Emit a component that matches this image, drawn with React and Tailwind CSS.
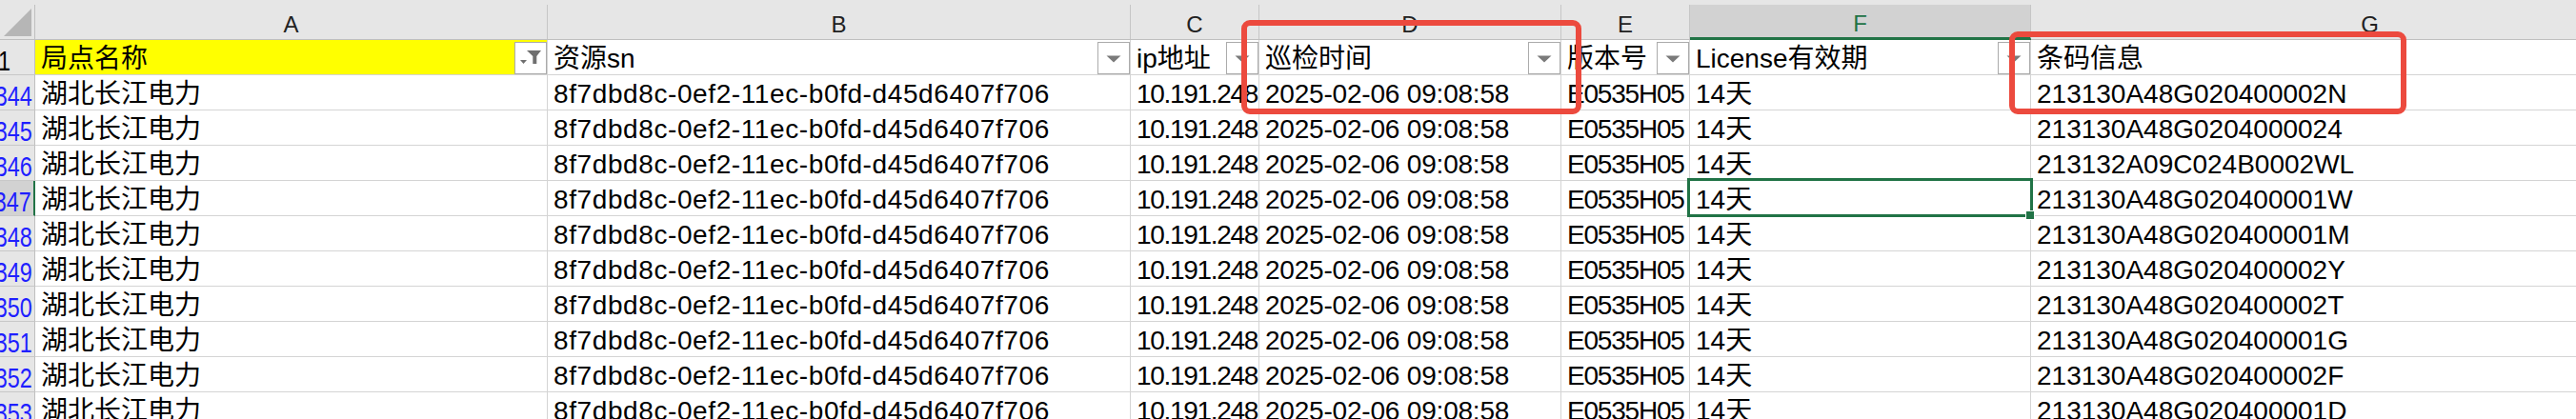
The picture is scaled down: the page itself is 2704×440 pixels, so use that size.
import React from "react";

const ROWS = [
  { n: "1344", g: "213130A48G020400002N" },
  { n: "1345", g: "213130A48G0204000024" },
  { n: "1346", g: "213132A09C024B0002WL" },
  { n: "1347", g: "213130A48G020400001W", selected: true },
  { n: "1348", g: "213130A48G020400001M" },
  { n: "1349", g: "213130A48G020400002Y" },
  { n: "1350", g: "213130A48G020400002T" },
  { n: "1351", g: "213130A48G020400001G" },
  { n: "1352", g: "213130A48G020400002F" },
  { n: "1353", g: "213130A48G020400001D" },
];

const LETTERS = ["A", "B", "C", "D", "E", "F", "G"];

const FilterBtn = ({ funnel }) => (
  <div className="shrink-0 self-end w-[34px] h-[34px] border border-[#ababab] bg-white">
    <svg width="32" height="32" viewBox="0 0 32 32">
      {funnel ? (
        <>
          <path d="M12 8H27L22.3 14V22H18.3V14Z" fill="#6f6f6f" />
          <path d="M5 18H12L8.5 22Z" fill="#6f6f6f" />
        </>
      ) : (
        <path d="M8.5 13.5H23.5L16 20.5Z" fill="#7a7a7a" />
      )}
    </svg>
  </div>
);

const Cell = ({ children, className = "" }) => (
  <div
    className={`h-[37px] border-r border-b border-[#d4d4d4] flex items-end overflow-hidden whitespace-nowrap ${className}`}
  >
    {children}
  </div>
);

const Txt = ({ children, className = "" }) => (
  <span className={`block pl-[6px] text-[28px] leading-[32px] text-black ${className}`}>
    {children}
  </span>
);

const HeadCell = ({ label, funnel, yellow }) => (
  <Cell className={yellow ? "bg-[#ffff00]" : "bg-white"}>
    <div className="flex-1 min-w-0 overflow-hidden">
      <Txt>{label}</Txt>
    </div>
    <FilterBtn funnel={funnel} />
  </Cell>
);

const RowNum = ({ n, selected, black }) => (
  <div
    className={`h-[37px] border-b border-[#c8c8c8] flex items-end overflow-hidden ${
      selected
        ? "bg-[#d2d2d2] border-r-2 border-r-[#217346]"
        : "bg-[#e6e6e6] border-r border-r-[#bfbfbf]"
    } ${black ? "justify-start" : "justify-end pr-[2px]"}`}
  >
    <span
      className={`block text-[30px] leading-[29px] scale-x-[0.78] ${
        black ? "text-black origin-left -ml-[2px]" : "text-[#1f1fff] origin-right"
      }`}
    >
      {n}
    </span>
  </div>
);

export default function App() {
  return (
    <div className="relative w-[2704px] h-[440px] overflow-hidden bg-white font-['Liberation_Sans','Noto_Sans_CJK_SC',sans-serif]">
      <div className="grid grid-cols-[37px_538px_612px_135px_317px_135px_358px_712px] w-[2844px]">
        {/* column letters */}
        <div className="h-[42px] bg-[#e6e6e6] border-b border-[#bfbfbf] pt-[5px]">
          <div className="h-full border-r border-[#bfbfbf]">
            <svg width="36" height="36" viewBox="0 0 36 36">
              <path d="M4 33H33V4Z" fill="#b6b6b6" />
            </svg>
          </div>
        </div>
        {LETTERS.map((l) => {
          const sel = l === "F";
          return (
            <div
              key={l}
              className={`h-[42px] bg-[#e6e6e6] border-b pt-[5px] ${
                sel ? "border-[#217346]" : "border-[#bfbfbf]"
              }`}
            >
              <div
                className={`h-full border-r border-r-[#c6c6c6] flex items-end justify-center text-[24px] leading-[28px] ${
                  sel
                    ? "bg-[#d2d2d2] border-b-2 border-b-[#217346] text-[#217346] pb-0"
                    : "text-[#222] pb-[1px]"
                }`}
              >
                {l}
              </div>
            </div>
          );
        })}

        {/* row 1: table headers */}
        <RowNum n="1" black />
        <HeadCell label="局点名称" funnel yellow />
        <HeadCell label="资源sn" />
        <HeadCell label="ip地址" />
        <HeadCell label="巡检时间" />
        <HeadCell label="版本号" />
        <HeadCell label="License有效期" />
        <HeadCell label="条码信息" />

        {ROWS.map((r) => (
          <React.Fragment key={r.n}>
            <RowNum n={r.n} selected={r.selected} />
            <Cell>
              <Txt>湖北长江电力</Txt>
            </Cell>
            <Cell>
              <Txt className="tracking-[0.6px]">8f7dbd8c-0ef2-11ec-b0fd-d45d6407f706</Txt>
            </Cell>
            <Cell>
              <Txt className="tracking-[-1.3px] pl-[4px]">10.191.248</Txt>
            </Cell>
            <Cell>
              <Txt className="tracking-[-0.2px]">2025-02-06 09:08:58</Txt>
            </Cell>
            <Cell>
              <Txt className="tracking-[-1.2px]">E0535H05</Txt>
            </Cell>
            <Cell>
              <Txt>14天</Txt>
            </Cell>
            <Cell>
              <Txt>{r.g}</Txt>
            </Cell>
          </React.Fragment>
        ))}
      </div>

      {/* active cell F1347 */}
      <div className="absolute left-[1771px] top-[187px] w-[363px] h-[41px] border-[3px] border-[#217346]" />
      <div className="absolute left-[2126px] top-[221px] w-[10px] h-[10px] bg-[#217346] border border-white" />

      {/* red annotation boxes */}
      <div className="absolute left-[1303px] top-[21px] w-[357px] h-[99px] border-[6px] border-[#ec4a3e] rounded-[9px]" />
      <div className="absolute left-[2109px] top-[33px] w-[417px] h-[87px] border-[6px] border-[#ec4a3e] rounded-[9px]" />
    </div>
  );
}
